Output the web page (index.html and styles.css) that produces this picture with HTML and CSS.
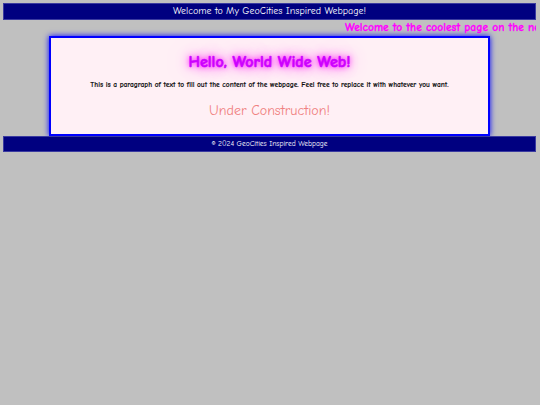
FILE: index.html
```html
<!DOCTYPE html>
<html>
<head>
<meta charset="utf-8">
<link rel="stylesheet" href="styles.css">
</head>
<body>
<header class="top">Welcome to My GeoCities Inspired Webpage!</header>
<div class="ticker"><span class="ticker-text">Welcome to the coolest page on the net! Enjoy your stay!</span></div>
<main class="box">
  <h1 class="title">Hello, World Wide Web!</h1>
  <p class="para">This is a paragraph of text to fill out the content of the webpage. Feel free to replace it with whatever you want.</p>
  <h2 class="construction">Under Construction!</h2>
</main>
<footer class="bottom">© 2024 GeoCities Inspired Webpage</footer>
</body>
</html>
```
FILE: styles.css
```css
html, body {
  margin: 0;
  padding: 0;
}
body {
  background: #c0c0c0;
  padding: 3px 4px 3px 3px;
  font-family: "Comic Sans MS", "Comic Neue", cursive;
}
.top {
  background: #000080;
  color: #ffffff;
  border: 1px solid #3a3aa0;
  height: 15px;
  line-height: 15px;
  font-size: 10px;
  text-align: center;
}
.ticker {
  height: 16px;
  line-height: 16px;
  overflow: hidden;
  white-space: nowrap;
  color: #ff00ff;
  font-size: 11.5px;
  font-weight: bold;
  -webkit-text-stroke: 0.3px #ff00ff;
}
.ticker-text {
  display: inline-block;
  padding-left: 342px;
}
.box {
  width: 80%;
  margin: 0 auto;
  padding: 0 5px;
  background: #fff0f5;
  border: 2px solid #0000ff;
  box-shadow: 0 0 6px #0000ff;
  height: 96px;
  text-align: center;
  box-sizing: content-box;
}
.title {
  margin: 0;
  padding-top: 15px;
  font-size: 16px;
  line-height: 18px;
  font-weight: bold;
  color: #cc00ff;
  -webkit-text-stroke: 0.6px #cc00ff;
  text-shadow: 0 0 5px #ff00ff, 0 0 12px #ff00ff, 0 0 30px #ff80ff;
}
.para {
  margin: 9px 0 0;
  font-size: 7.4px;
  line-height: 10px;
  font-weight: bold;
  color: #111;
  -webkit-text-stroke: 0.1px #000;
}
.construction {
  margin: 12px 0 0;
  font-size: 14px;
  line-height: 18px;
  font-weight: normal;
  color: #f08080;
}
.bottom {
  background: #000080;
  color: #fff;
  border: 1px solid #3a3aa0;
  height: 14px;
  line-height: 14px;
  font-size: 7.5px;
  text-align: center;
}
```
